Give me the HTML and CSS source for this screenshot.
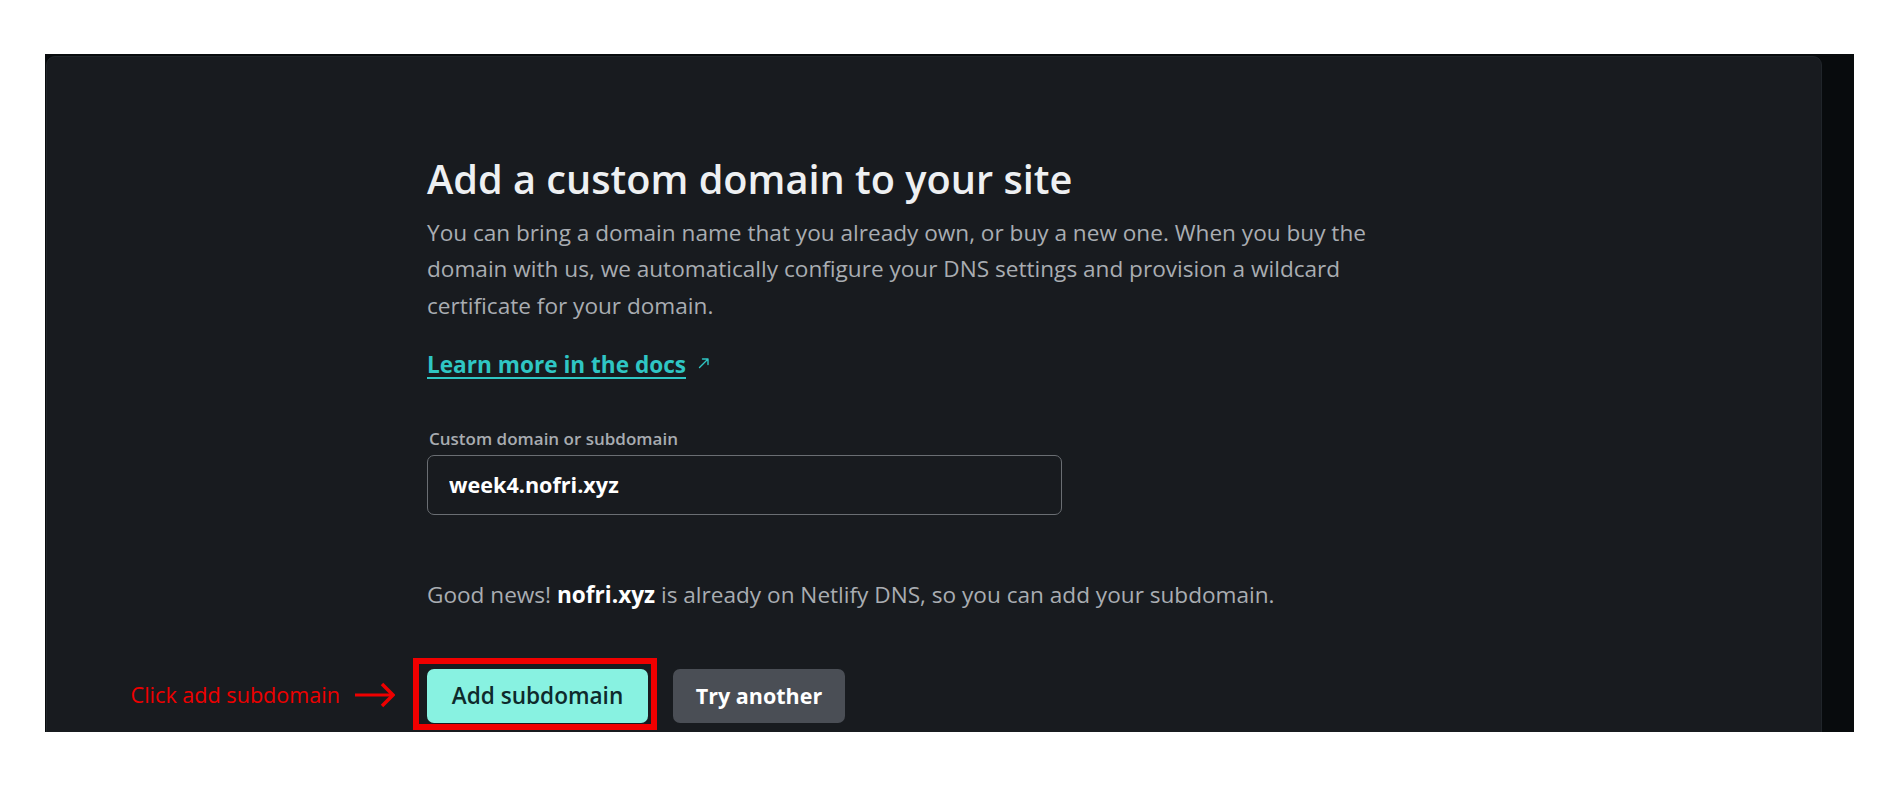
FILE: index.html
```html
<!DOCTYPE html>
<html lang="en">
<head>
<meta charset="utf-8">
<title>Add a custom domain</title>
<link rel="stylesheet" href="styles.css">
</head>
<body>
<div class="frame">
  <section class="card">
    <div class="content">
      <h1 class="title">Add a custom domain to your site</h1>
      <p class="lead">You can bring a domain name that you already own, or buy a new one. When you buy the domain with us, we automatically configure your DNS settings and provision a wildcard certificate for your domain.</p>
      <p class="docs"><a class="docs-link" href="#">Learn more in the docs</a><svg class="ext" width="14" height="14" viewBox="0 0 14 14"><path d="M2.5 11.5 L11 3 M5.5 3 H11 V8.5" fill="none" stroke="currentColor" stroke-width="1.4" stroke-linecap="round" stroke-linejoin="round"/></svg></p>
      <label class="field-label" for="domain">Custom domain or subdomain</label>
      <div class="input-box"><input id="domain" class="input" type="text" value="week4.nofri.xyz"></div>
      <p class="news">Good news! <strong>nofri.xyz</strong> is already on Netlify DNS, so you can add your subdomain.</p>
      <div class="actions">
        <button class="btn btn-primary">Add subdomain</button>
        <button class="btn btn-secondary">Try another</button>
        <div class="highlight"></div>
        <div class="note"><span class="note-text">Click add subdomain</span><svg class="note-arrow" width="40" height="26" viewBox="0 0 40 26"><path d="M0 13 H36" stroke="#ee0000" stroke-width="3"/><path d="M27 2 L38 13 L27 24" fill="none" stroke="#ee0000" stroke-width="3.5"/></svg></div>
      </div>
    </div>
  </section>
</div>
</body>
</html>
```
FILE: styles.css
```css
html, body {
  margin: 0;
  padding: 0;
  background: #ffffff;
}
body {
  font-family: "Open Sans", "Noto Sans", sans-serif;
}
.frame {
  margin: 54px 0 0 45px;
  width: 1809px;
  height: 678px;
  background: #080b0d;
  overflow: hidden;
  display: flex;
}
.card {
  margin: 2px 0 0 1px;
  width: 1776px;
  height: 720px;
  background: #181b1f;
  border: 1px solid #20252a;
  border-radius: 9px;
  box-sizing: border-box;
}
.content {
  margin-left: 380px;
  padding-top: 96px;
  width: 990px;
  display: flex;
  flex-direction: column;
  align-items: flex-start;
}
.title {
  margin: 0;
  color: #eef0f2;
  font-size: 39.7px;
  font-weight: 600;
  line-height: 52px;
}
.lead {
  margin: 10px 0 0;
  color: #a9adb2;
  font-size: 22.6px;
  line-height: 36.3px;
}
.docs {
  margin: 23px 0 0;
  display: flex;
  align-items: center;
  gap: 11px;
  color: #2fc6c4;
  font-size: 22.6px;
  line-height: 36px;
}
.docs-link {
  color: #2fc6c4;
  font-weight: 700;
  text-decoration: underline;
  text-decoration-thickness: 2px;
  text-underline-offset: 4px;
}
.ext {
  margin-top: -4px;
}
.field-label {
  margin-top: 45px;
  margin-left: 2px;
  color: #a8acb1;
  font-size: 17px;
  font-weight: 600;
  line-height: 22px;
}
.input-box {
  margin-top: 5px;
  width: 635px;
  height: 60px;
  border: 1px solid #6a6e73;
  border-radius: 7px;
  box-sizing: border-box;
  display: flex;
  align-items: center;
}
.input {
  width: 100%;
  background: transparent;
  border: 0;
  outline: 0;
  padding: 0 0 0 21px;
  color: #ffffff;
  font-family: inherit;
  font-size: 21.6px;
  font-weight: 700;
}
.news {
  margin: 62px 0 0;
  color: #a9adb2;
  font-size: 22.6px;
  line-height: 36px;
}
.news strong {
  color: #ffffff;
  font-weight: 700;
}
.actions {
  position: relative;
  margin-top: 56px;
  display: flex;
  gap: 25px;
}
.btn {
  height: 54px;
  padding: 0;
  border: 0;
  border-radius: 7px;
  font-family: inherit;
  font-size: 22.6px;
  font-weight: 600;
}
.btn-primary {
  width: 221px;
  background: #88f2e1;
  color: #0e2a2c;
}
.btn-secondary {
  width: 172px;
  background: #4a4e55;
  color: #ffffff;
  font-size: 21.5px;
  font-weight: 700;
}
.highlight {
  position: absolute;
  left: -14px;
  top: -11px;
  width: 244px;
  height: 72px;
  border: 6px solid #f00000;
  box-sizing: border-box;
}
.note {
  position: absolute;
  right: calc(100% + 32px);
  top: 11px;
  display: flex;
  align-items: center;
  gap: 15px;
  white-space: nowrap;
}
.note-text {
  color: #ee0000;
  font-size: 21.6px;
  line-height: 30px;
}
```
